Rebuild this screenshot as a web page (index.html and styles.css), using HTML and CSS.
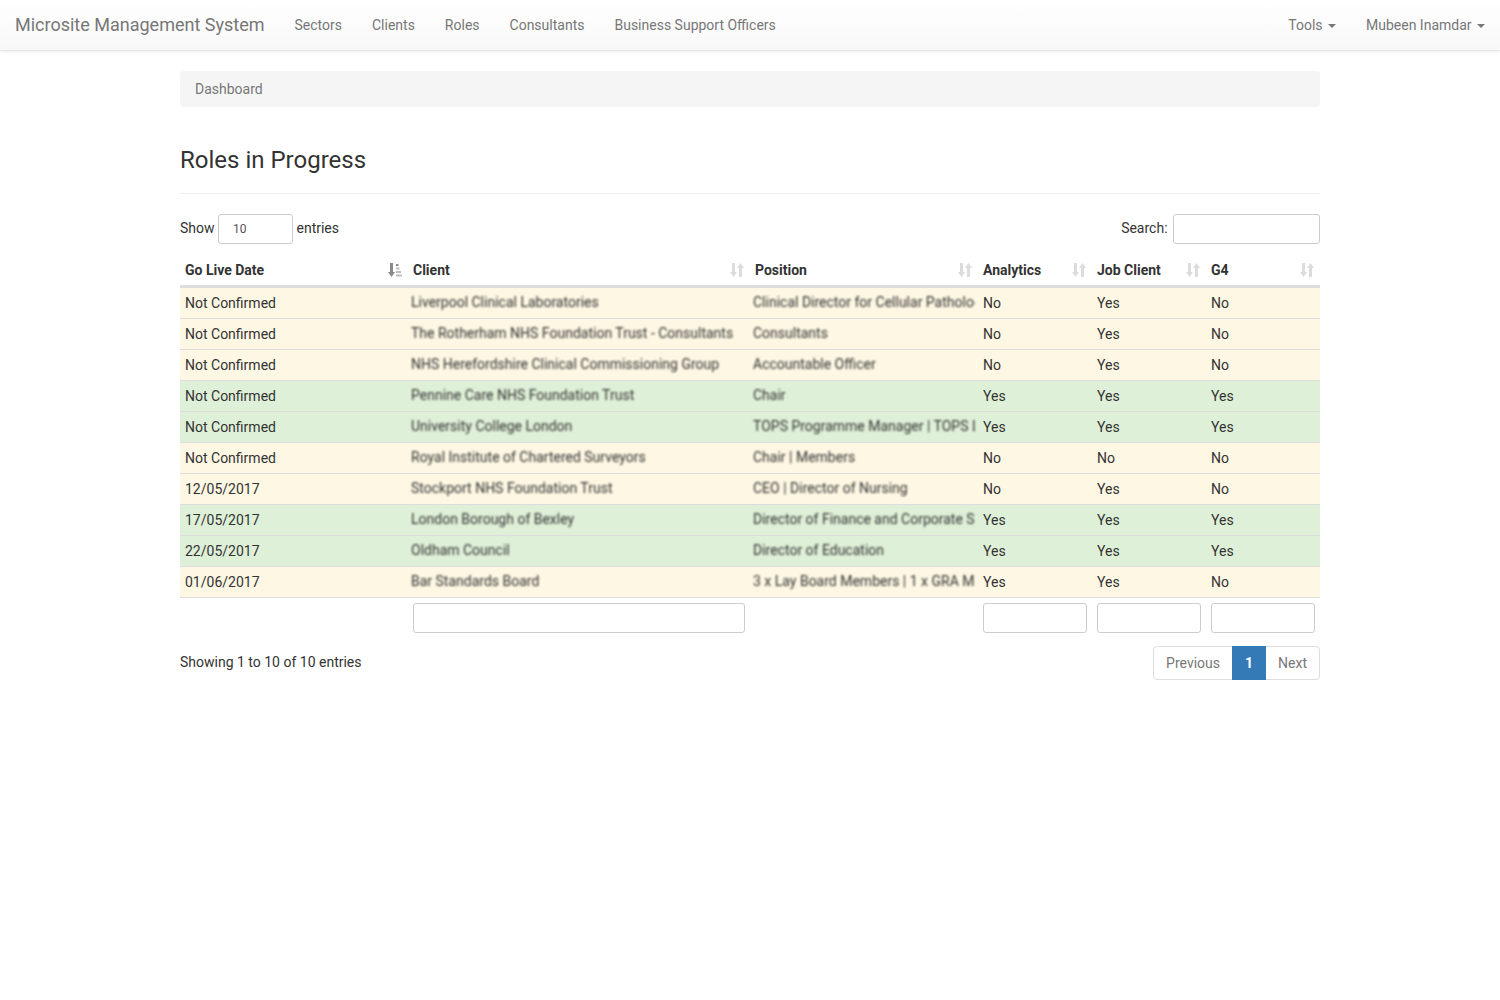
FILE: index.html
```html
<!DOCTYPE html>
<html lang="en">
<head>
<meta charset="utf-8">
<title>Microsite Management System</title>
<link rel="stylesheet" href="styles.css">
</head>
<body>
<nav class="navbar">
  <a class="brand" href="#">Microsite Management System</a>
  <ul class="nav">
    <li><a href="#">Sectors</a></li>
    <li><a href="#">Clients</a></li>
    <li><a href="#">Roles</a></li>
    <li><a href="#">Consultants</a></li>
    <li><a href="#">Business Support Officers</a></li>
  </ul>
  <ul class="nav nav-right">
    <li><a href="#">Tools <span class="caret"></span></a></li>
    <li><a href="#">Mubeen Inamdar <span class="caret"></span></a></li>
  </ul>
</nav>
<main class="container">
  <div class="breadcrumb">Dashboard</div>
  <h1 class="page-header">Roles in Progress</h1>
  <div class="controls">
    <label class="length">Show <input class="length-input" type="text" value="10"> entries</label>
    <label class="search">Search: <input class="search-input" type="text"></label>
  </div>
  <table class="roles">
    <colgroup><col class="c-date"><col class="c-client"><col class="c-pos"><col class="c-flag"><col class="c-flag"><col class="c-flag"></colgroup>
    <thead>
      <tr>
        <th>Go Live Date<svg class="sort" viewBox="0 0 14 14"><path class="on" d="M2 0h3v9h2L3.500 14 0 9h2z"/><path class="on" d="M8 1h2.500v2H8z"/><path class="dim-bar" d="M8 4.500h3.500v2H8zM8 8h5v2H8zM8 11.500h6v2H8z"/></svg></th>
        <th>Client<svg class="sort" viewBox="0 0 14 14"><path class="dim" d="M2 0h3v9h2L3.500 14 0 9h2zM9 14h3V5h2L10.500 0 7 5h2z"/></svg></th>
        <th>Position<svg class="sort" viewBox="0 0 14 14"><path class="dim" d="M2 0h3v9h2L3.500 14 0 9h2zM9 14h3V5h2L10.500 0 7 5h2z"/></svg></th>
        <th>Analytics<svg class="sort" viewBox="0 0 14 14"><path class="dim" d="M2 0h3v9h2L3.500 14 0 9h2zM9 14h3V5h2L10.500 0 7 5h2z"/></svg></th>
        <th>Job Client<svg class="sort" viewBox="0 0 14 14"><path class="dim" d="M2 0h3v9h2L3.500 14 0 9h2zM9 14h3V5h2L10.500 0 7 5h2z"/></svg></th>
        <th>G4<svg class="sort" viewBox="0 0 14 14"><path class="dim" d="M2 0h3v9h2L3.500 14 0 9h2zM9 14h3V5h2L10.500 0 7 5h2z"/></svg></th>
      </tr>
    </thead>
    <tbody>
      <tr class="warn"><td>Not Confirmed</td><td><span class="blur">Liverpool Clinical Laboratories</span></td><td><span class="blur">Clinical Director for Cellular Pathology | Consultant</span></td><td>No</td><td>Yes</td><td>No</td></tr>
      <tr class="warn"><td>Not Confirmed</td><td><span class="blur">The Rotherham NHS Foundation Trust - Consultants</span></td><td><span class="blur">Consultants</span></td><td>No</td><td>Yes</td><td>No</td></tr>
      <tr class="warn"><td>Not Confirmed</td><td><span class="blur">NHS Herefordshire Clinical Commissioning Group</span></td><td><span class="blur">Accountable Officer</span></td><td>No</td><td>Yes</td><td>No</td></tr>
      <tr class="ok"><td>Not Confirmed</td><td><span class="blur">Pennine Care NHS Foundation Trust</span></td><td><span class="blur">Chair</span></td><td>Yes</td><td>Yes</td><td>Yes</td></tr>
      <tr class="ok"><td>Not Confirmed</td><td><span class="blur">University College London</span></td><td><span class="blur">TOPS Programme Manager | TOPS Lead</span></td><td>Yes</td><td>Yes</td><td>Yes</td></tr>
      <tr class="warn"><td>Not Confirmed</td><td><span class="blur">Royal Institute of Chartered Surveyors</span></td><td><span class="blur">Chair | Members</span></td><td>No</td><td>No</td><td>No</td></tr>
      <tr class="warn"><td>12/05/2017</td><td><span class="blur">Stockport NHS Foundation Trust</span></td><td><span class="blur">CEO | Director of Nursing</span></td><td>No</td><td>Yes</td><td>No</td></tr>
      <tr class="ok"><td>17/05/2017</td><td><span class="blur">London Borough of Bexley</span></td><td><span class="blur">Director of Finance and Corporate Services</span></td><td>Yes</td><td>Yes</td><td>Yes</td></tr>
      <tr class="ok"><td>22/05/2017</td><td><span class="blur">Oldham Council</span></td><td><span class="blur">Director of Education</span></td><td>Yes</td><td>Yes</td><td>Yes</td></tr>
      <tr class="warn"><td>01/06/2017</td><td><span class="blur">Bar Standards Board</span></td><td><span class="blur">3 x Lay Board Members | 1 x GRA Member</span></td><td>Yes</td><td>Yes</td><td>No</td></tr>
    </tbody>
    <tfoot>
      <tr><td></td><td><input class="filter" type="text"></td><td></td><td><input class="filter" type="text"></td><td><input class="filter" type="text"></td><td><input class="filter" type="text"></td></tr>
    </tfoot>
  </table>
  <div class="table-footer">
    <div class="info">Showing 1 to 10 of 10 entries</div>
    <ul class="pagination">
      <li><a href="#">Previous</a></li>
      <li class="active"><a href="#">1</a></li>
      <li><a href="#">Next</a></li>
    </ul>
  </div>
</main>
</body>
</html>
```
FILE: styles.css
```css
* { box-sizing: border-box; }
html, body { margin: 0; padding: 0; }
body {
  font-family: Roboto, "Liberation Sans", sans-serif;
  font-size: 14px;
  line-height: 20px;
  color: #333;
  background: #fff;
}
a { text-decoration: none; color: inherit; }
ul { list-style: none; margin: 0; padding: 0; }

.navbar {
  display: flex;
  align-items: stretch;
  height: 51px;
  background: linear-gradient(to bottom, #fff 0%, #f8f8f8 100%);
  border-bottom: 1px solid #e7e7e7;
  box-shadow: 0 1px 3px rgba(0, 0, 0, .08);
  color: #777;
}
.brand { padding: 15px; font-size: 18px; color: #777; }
.nav { display: flex; }
.nav a { display: block; padding: 15px; }
.nav-right { margin-left: auto; }
.caret {
  display: inline-block;
  width: 0;
  height: 0;
  margin-left: 2px;
  vertical-align: middle;
  border-top: 4px solid #777;
  border-left: 4px solid transparent;
  border-right: 4px solid transparent;
}

.container { width: 1140px; margin: 0 auto; }
.breadcrumb {
  margin-top: 20px;
  height: 36px;
  padding: 8px 15px;
  background: #f5f5f5;
  border-radius: 4px;
  color: #777;
}
.page-header {
  margin: 40px 0 20px;
  padding-bottom: 20px;
  border-bottom: 1px solid #eee;
  font-size: 24px;
  font-weight: 400;
  line-height: 26px;
  color: #333;
}

.controls { display: flex; justify-content: space-between; align-items: center; height: 30px; }
.length-input, .search-input, .filter {
  height: 30px;
  border: 1px solid #ccc;
  border-radius: 3px;
  background: #fff;
  font: 12px Roboto, sans-serif;
  color: #555;
}
.length-input { width: 75px; padding: 0 14px; vertical-align: middle; }
.search-input { width: 147px; vertical-align: middle; margin-left: 2px; }

.roles {
  width: 100%;
  margin-top: 10px;
  border-collapse: collapse;
  table-layout: fixed;
  color: #333;
}
.c-date { width: 228px; }
.c-client { width: 342px; }
.c-pos { width: 228px; }
.c-flag { width: 114px; }
.roles th {
  position: relative;
  height: 32px;
  padding: 6px 5px 5px;
  text-align: left;
  font-weight: 700;
  border-bottom: 3px solid #ddd;
  white-space: nowrap;
}
.sort { position: absolute; right: 6px; top: 9px; width: 14px; height: 14px; }
.on { fill: #8a8a8a; }
.dim-bar { fill: #bdbdbd; }
.dim { fill: #dcdcdc; }
.roles tbody td {
  height: 30px;
  padding: 5px 5px 4px;
  border-bottom: 1px solid #ddd;
  white-space: nowrap;
  overflow: hidden;
  vertical-align: top;
  line-height: 21px;
}
.warn td { background: #fdf7e3; }
.ok td { background: #dff0d8; }
.blur {
  display: block;
  margin: -1px -2px 1px -2px;
  overflow: hidden;
  filter: blur(.9px);
  color: #333;
}
.roles tfoot td { padding: 5px 5px 0; height: 35px; vertical-align: top; }
.filter { display: block; width: 100%; }

.table-footer { display: flex; justify-content: space-between; margin-top: 13px; }
.info { padding-top: 6px; line-height: 20px; }
.pagination { display: flex; }
.pagination a {
  display: block;
  height: 34px;
  padding: 6px 12px;
  margin-left: -1px;
  border: 1px solid #ddd;
  color: #777;
  background: #fff;
}
.pagination li:first-child a { border-radius: 4px 0 0 4px; margin-left: 0; }
.pagination li:last-child a { border-radius: 0 4px 4px 0; }
.pagination .active { position: relative; z-index: 1; }
.pagination .active a { background: #337ab7; border-color: #337ab7; color: #fff; font-weight: 700; }
```
